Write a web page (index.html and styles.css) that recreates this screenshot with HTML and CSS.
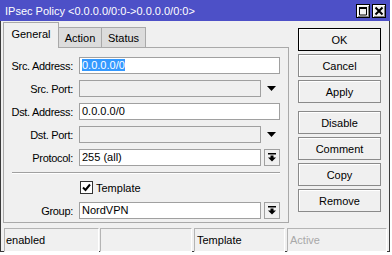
FILE: index.html
```html
<!DOCTYPE html>
<html lang="en">
<head>
  <meta charset="UTF-8" />
  <meta name="viewport" content="width=device-width, initial-scale=1.0" />
  <title>IPsec Policy</title>
  <link rel="stylesheet" href="styles.css">
</head>
<body>
  <div class="window">
    <div class="titlebar">
      <span class="title">IPsec Policy &lt;0.0.0.0/0:0-&gt;0.0.0.0/0:0&gt;</span>
      <div class="wbtns">
        <span class="wbtn">
          <svg width="10" height="10" viewBox="0 0 10 10"><path d="M1 1.5H9M1.5 1V9H8.5V1" fill="none" stroke="#000" stroke-width="1"/><rect x="1" y="1" width="8" height="2" fill="#000"/></svg>
        </span>
        <span class="wbtn">
          <svg width="10" height="10" viewBox="0 0 10 10"><path d="M1.5 1.5L8.5 8.5M8.5 1.5L1.5 8.5" stroke="#000" stroke-width="2"/></svg>
        </span>
      </div>
    </div>

    <div class="frame">
      <div class="main">
        <div class="left">
          <div class="tabs">
            <div class="tab active">General</div>
            <div class="tab">Action</div>
            <div class="tab">Status</div>
          </div>

          <div class="panel">
            <div class="row">
              <label class="label">Src. Address:</label>
              <div class="field"><span class="sel">0.0.0.0/0</span></div>
            </div>
            <div class="row">
              <label class="label">Src. Port:</label>
              <div class="field disabled"></div>
              <span class="arrow"><svg width="9" height="5" viewBox="0 0 9 5"><path d="M0 0H9L4.5 5Z" fill="#000"/></svg></span>
            </div>
            <div class="row">
              <label class="label">Dst. Address:</label>
              <div class="field">0.0.0.0/0</div>
            </div>
            <div class="row">
              <label class="label">Dst. Port:</label>
              <div class="field disabled"></div>
              <span class="arrow"><svg width="9" height="5" viewBox="0 0 9 5"><path d="M0 0H9L4.5 5Z" fill="#000"/></svg></span>
            </div>
            <div class="row">
              <label class="label">Protocol:</label>
              <div class="field">255 (all)</div>
              <span class="dropbtn"><svg width="8" height="9" viewBox="0 0 8 9"><rect x="0" y="0" width="8" height="1.5" fill="#000"/><path d="M2.5 2.5H5.5V4.5H8L4 8.5L0 4.5H2.5Z" fill="#000"/></svg></span>
            </div>

            <div class="separator"></div>

            <div class="row check-row">
              <span class="label"></span>
              <span class="checkbox"><svg width="11" height="11" viewBox="0 0 11 11"><path d="M2 5.5L4.5 8L9 2.5" fill="none" stroke="#000" stroke-width="2"/></svg></span>
              <span class="check-text">Template</span>
            </div>

            <div class="row">
              <label class="label">Group:</label>
              <div class="field">NordVPN</div>
              <span class="dropbtn"><svg width="8" height="9" viewBox="0 0 8 9"><rect x="0" y="0" width="8" height="1.5" fill="#000"/><path d="M2.5 2.5H5.5V4.5H8L4 8.5L0 4.5H2.5Z" fill="#000"/></svg></span>
            </div>
          </div>
        </div>

        <div class="buttons">
          <button class="btn default">OK</button>
          <button class="btn">Cancel</button>
          <button class="btn">Apply</button>
          <button class="btn spaced">Disable</button>
          <button class="btn">Comment</button>
          <button class="btn">Copy</button>
          <button class="btn">Remove</button>
        </div>
      </div>

      <div class="statusbar">
        <div class="cell c1">enabled</div>
        <div class="cell c2"></div>
        <div class="cell c3">Template</div>
        <div class="cell c4 muted">Active</div>
      </div>
    </div>
  </div>
</body>
</html>
```

FILE: styles.css
```css
body {
  margin: 0;
  background: #fff;
  font-family: "Liberation Sans", Arial, sans-serif;
  font-size: 11px;
  color: #000;
}

.window {
  width: 390px;
  height: 252px;
}

.titlebar {
  height: 21px;
  background: #4d50c7;
  display: flex;
  align-items: center;
  justify-content: space-between;
  padding: 0 4px 0 5px;
  box-sizing: border-box;
}

.title {
  color: #fff;
  font-size: 11px;
}

.wbtns {
  display: flex;
  gap: 2px;
}

.wbtn {
  width: 14px;
  height: 14px;
  box-sizing: border-box;
  background: #f0f0f0;
  border: 1px solid #000;
  box-shadow: inset 1px 1px #fff, inset -1px -1px #808080;
  display: flex;
  align-items: center;
  justify-content: center;
}

.frame {
  height: 231px;
  box-sizing: border-box;
  background: #f0f0f0;
  border: 1px solid #3a3a3a;
  border-top: none;
  padding: 1px 0 0 2px;
  display: flex;
  flex-direction: column;
}

.main {
  display: flex;
  align-items: flex-start;
}

.left {
  width: 286px;
}

.tabs {
  height: 25px;
  display: flex;
  align-items: flex-end;
}

.tab {
  height: 20px;
  box-sizing: border-box;
  border: 1px solid #a9a9a9;
  border-bottom: none;
  background: #dcdcdc;
  display: flex;
  align-items: center;
  justify-content: center;
  margin-left: -1px;
}

.tab:nth-child(2) {
  width: 44px;
}

.tab:nth-child(3) {
  width: 45px;
}

.tab.active {
  width: 56px;
  height: 26px;
  margin-left: 0;
  margin-bottom: -1px;
  background: #f0f0f0;
  position: relative;
  padding-bottom: 4px;
}

.panel {
  height: 176px;
  box-sizing: border-box;
  border: 1px solid #a9a9a9;
  padding: 9px 8px 0 0;
  display: flex;
  flex-direction: column;
}

.row {
  display: flex;
  align-items: center;
  height: 17px;
  margin-bottom: 6px;
}

.label {
  width: 69px;
  flex: none;
  text-align: right;
  margin-right: 6px;
  letter-spacing: -0.3px;
}

.field {
  flex: 1;
  height: 17px;
  box-sizing: border-box;
  border: 1px solid #a0a0a0;
  background: #fff;
  padding-left: 2px;
  line-height: 15px;
  white-space: nowrap;
}

.field.disabled {
  background: #f0f0f0;
}

.sel {
  background: #3399ff;
  color: #fff;
}

.arrow {
  width: 17px;
  flex: none;
  display: flex;
  justify-content: center;
  padding-left: 2px;
}

.dropbtn {
  width: 16px;
  height: 17px;
  flex: none;
  margin-left: 3px;
  box-sizing: border-box;
  border: 1px solid #a0a0a0;
  background: #f0f0f0;
  display: flex;
  align-items: center;
  justify-content: center;
}

.separator {
  height: 1px;
  margin: 0 0 7px 8px;
  border-top: 1px solid #a0a0a0;
  border-bottom: 1px solid #fff;
}

.check-row {
  height: 13px;
  margin-bottom: 8px;
}

.checkbox {
  width: 13px;
  height: 13px;
  box-sizing: border-box;
  margin-left: 1px;
  border: 1px solid #333;
  background: #fff;
  display: flex;
  align-items: center;
  justify-content: center;
}

.check-text {
  margin-left: 3px;
}

.buttons {
  width: 83px;
  margin: 6px 0 0 9px;
  display: flex;
  flex-direction: column;
  gap: 3px;
}

.btn {
  height: 23px;
  padding: 0;
  font-family: "Liberation Sans", Arial, sans-serif;
  font-size: 11px;
  color: #000;
  background: #f0f0f0;
  border: 1px solid #8a8a8a;
  box-shadow: inset 1px 1px #fff;
}

.btn.default {
  border-color: #000;
}

.btn.spaced {
  margin-top: 5px;
}

.statusbar {
  display: flex;
  margin-top: 5px;
  padding-left: 1px;
}

.cell {
  height: 24px;
  box-sizing: border-box;
  border: 1px solid #b4b4b4;
  border-right-color: #fff;
  border-bottom-color: #fff;
  padding-left: 1px;
  line-height: 22px;
  white-space: nowrap;
}

.c1 {
  width: 95px;
}

.c2 {
  width: 92px;
  margin-left: 1px;
}

.c3 {
  width: 91px;
  margin-left: 2px;
  padding-left: 2px;
}

.c4 {
  width: 100px;
  margin-left: 2px;
  padding-left: 2px;
}

.muted {
  color: #a8a8a8;
}
```
